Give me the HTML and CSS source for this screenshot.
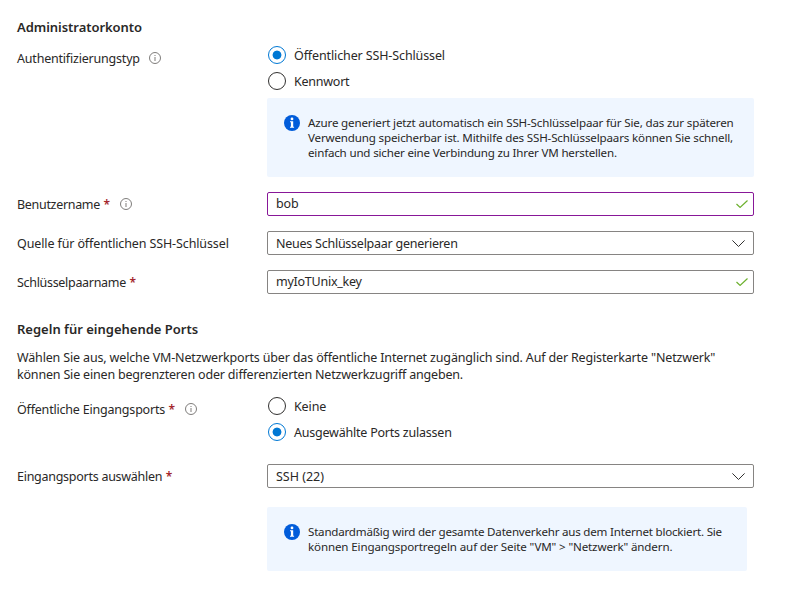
FILE: index.html
```html
<!DOCTYPE html>
<html lang="de">
<head>
<meta charset="utf-8">
<title>Virtuellen Computer erstellen</title>
<link rel="stylesheet" href="styles.css">
</head>
<body>
<svg class="defs" width="0" height="0">
  <symbol id="hint" viewBox="0 0 12 12"><circle cx="6" cy="6" r="5.5" fill="none" stroke="#706e6c" stroke-width=".9"/><path d="M6 5v4M6 3v1" stroke="#8a8886" stroke-width="1.1" fill="none"/></symbol>
  <symbol id="info" viewBox="0 0 16 16"><circle cx="8" cy="8" r="8" fill="#015cda"/><circle cx="8" cy="3.9" r="1.4" fill="#fff"/><path d="M6 6.2h3.2v5.5h.9v1.1H6v-1.1h.9V7.3H6z" fill="#fff"/></symbol>
  <symbol id="check" viewBox="0 0 12 8"><path d="M.5 4l3.6 3.4L11.5.5" fill="none" stroke="#6bb02c" stroke-width="1.2"/></symbol>
  <symbol id="chevron" viewBox="0 0 13 7"><path d="M.4.4l6.1 6.1L12.6.4" fill="none" stroke="#323130" stroke-width="1"/></symbol>
</svg>
<main class="form">
  <h2 class="title t-admin">Administratorkonto</h2>
  <section class="row auth">
    <div class="label"><span class="t-auth">Authentifizierungstyp</span><svg class="hint"><use href="#hint"/></svg></div>
    <div class="control">
      <div class="radio on"><i class="dot"></i><span class="r1">Öffentlicher SSH-Schlüssel</span></div>
      <div class="radio"><i class="dot"></i><span class="r2">Kennwort</span></div>
      <div class="banner first"><svg class="info"><use href="#info"/></svg>
        <p><span class="b1">Azure generiert jetzt automatisch ein SSH-Schlüsselpaar für Sie, das zur späteren</span><br><span class="b2">Verwendung speicherbar ist. Mithilfe des SSH-Schlüsselpaars können Sie schnell,</span><br><span class="b3">einfach und sicher eine Verbindung zu Ihrer VM herstellen.</span></p></div>
    </div>
  </section>
  <section class="row field-row">
    <div class="label"><span class="t-user">Benutzername</span><b class="req">*</b><svg class="hint"><use href="#hint"/></svg></div>
    <div class="field active"><span class="f1">bob</span><svg class="check"><use href="#check"/></svg></div>
  </section>
  <section class="row field-row">
    <div class="label"><span class="t-source">Quelle für öffentlichen SSH-Schlüssel</span></div>
    <div class="field select"><span class="f2">Neues Schlüsselpaar generieren</span><svg class="chevron"><use href="#chevron"/></svg></div>
  </section>
  <section class="row field-row">
    <div class="label"><span class="t-key">Schlüsselpaarname</span><b class="req">*</b></div>
    <div class="field"><span class="f3">myIoTUnix_key</span><svg class="check"><use href="#check"/></svg></div>
  </section>
  <h2 class="title rules">Regeln für eingehende Ports</h2>
  <p class="intro"><span class="i1">Wählen Sie aus, welche VM-Netzwerkports über das öffentliche Internet zugänglich sind. Auf der Registerkarte "Netzwerk"</span><br><span class="i2">können Sie einen begrenzteren oder differenzierten Netzwerkzugriff angeben.</span></p>
  <section class="row ports">
    <div class="label"><span class="t-ports">Öffentliche Eingangsports</span><b class="req">*</b><svg class="hint"><use href="#hint"/></svg></div>
    <div class="control">
      <div class="radio"><i class="dot"></i><span class="r3">Keine</span></div>
      <div class="radio on"><i class="dot"></i><span class="r4">Ausgewählte Ports zulassen</span></div>
    </div>
  </section>
  <section class="row select-row">
    <div class="label"><span class="t-select">Eingangsports auswählen</span><b class="req">*</b></div>
    <div class="control">
      <div class="field select"><span class="f4">SSH (22)</span><svg class="chevron"><use href="#chevron"/></svg></div>
      <div class="banner second"><svg class="info"><use href="#info"/></svg>
        <p><span class="b4">Standardmäßig wird der gesamte Datenverkehr aus dem Internet blockiert. Sie</span><br><span class="b5">können Eingangsportregeln auf der Seite "VM" &gt; "Netzwerk" ändern.</span></p></div>
    </div>
  </section>
</main>
</body>
</html>
```
FILE: styles.css
```css
* { box-sizing: border-box; }
body { margin: 0; background: #fff; color: #292827; font: 12.5px/18px "Segoe UI", "Noto Sans", sans-serif; letter-spacing: -.12px; white-space: nowrap; }
h2, p { margin: 0; }
svg { display: block; flex: none; }
.defs { position: absolute; }
.form { width: 754px; padding: 18px 0 0 17px; }
.title { font-size: 13px; line-height: 18px; font-weight: 600; letter-spacing: 0; }
.t-admin { letter-spacing: -.05px; }
.row { display: grid; grid-template-columns: 250px 487px; }
.label { display: flex; align-items: center; height: 18px; }
.label span, .radio span, .select span { padding-top: 2px; }
.req { width: 7px; margin-left: 3.5px; padding-top: 2px; color: #a4262c; font-weight: 600; font-size: 12px; letter-spacing: 0; }
.hint { width: 12px; height: 12px; margin-left: 9px; }
.req + .hint { margin-left: 9.5px; }
.auth { margin-top: 10px; height: 146px; }
.auth .label { margin-top: 3px; }
.radio { display: flex; align-items: center; height: 18px; margin-bottom: 8px; padding-left: 1px; }
.dot { width: 18px; height: 18px; margin-right: 8px; border: 1.5px solid #323130; border-radius: 50%; flex: none; }
.on .dot { border-color: #0078d4; background: radial-gradient(circle, #0078d4 4px, transparent 4.8px); }
.banner { display: flex; background: #eff6ff; border-radius: 2px; font-size: 11.6px; line-height: 15px; }
.banner p { margin-left: 8px; }
.info { width: 16px; height: 16px; }
.first { height: 79px; padding: 17px 0 0 17px; }
.second { width: 480px; height: 64px; margin-top: 19px; padding: 17px 0 0 17px; }
.field-row { height: 24px; margin-bottom: 15px; align-items: center; }
.field { display: flex; align-items: center; justify-content: space-between; height: 24px; padding: 0 5px 0 8px; border: 1px solid #868482; border-radius: 2px; }
.active { border-color: #881798; }
.check { width: 12px; height: 8px; }
.chevron { width: 13px; height: 7px; margin-right: 3px; }
.rules { margin-top: 26px; }
.intro { margin-top: 11px; line-height: 17px; }
.ports { margin-top: 14px; height: 67px; }
.ports .label { margin-top: 3px; }
.select-row .label { margin-top: 3px; }

/* Tracking per text run */
.t-auth, .t-ports { letter-spacing: -.2px; }
.t-user, .t-key { letter-spacing: -.31px; }
.t-select { letter-spacing: -.27px; }
.r2, .f2, .f3 { letter-spacing: -.25px; }
.r4 { letter-spacing: -.22px; }
.f4 { letter-spacing: -.02px; }
.b1, .b2 { letter-spacing: -.168px; }
.b3 { letter-spacing: -.19px; }
.b4 { letter-spacing: -.22px; }
.b5 { letter-spacing: -.14px; }
.i1 { letter-spacing: -.154px; }
.i2 { letter-spacing: -.185px; }
```
